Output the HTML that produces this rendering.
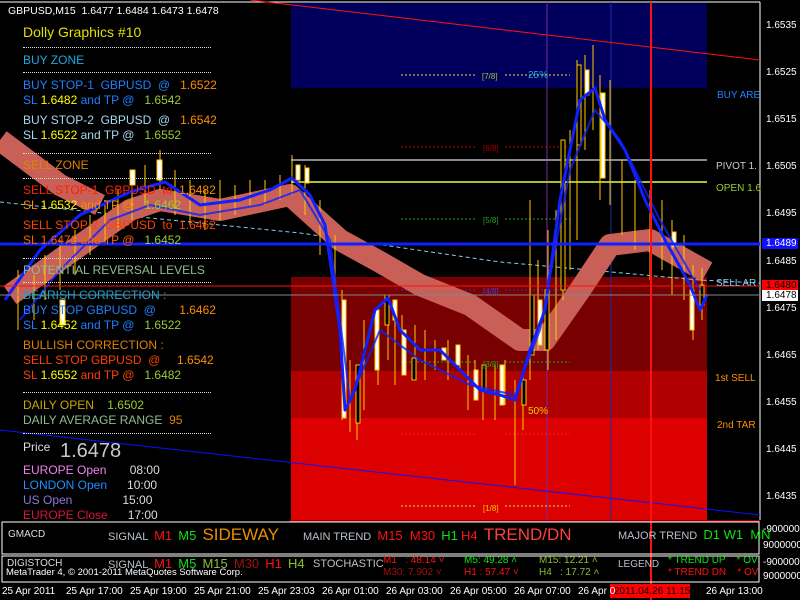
<!DOCTYPE html>
<html><head><meta charset="utf-8"><style>
body{margin:0;width:800px;height:600px;background:#000;overflow:hidden;font-family:"Liberation Sans",Arial,sans-serif;position:relative}
.t{position:absolute;font-size:12px;white-space:pre;line-height:14px}
.dot{position:absolute;left:23px;width:188px;border-top:1px dotted #ddd}
.ax{position:absolute;left:766px;font-size:10px;color:#fff}
.tm{position:absolute;top:586px;font-size:10px;color:#fff;white-space:pre}
.s{position:absolute;font-size:11px;white-space:pre;color:#b8c0c8;line-height:16px}
</style></head><body>
<svg width="800" height="600" style="position:absolute;left:0;top:0">
<rect x="0" y="2" width="760" height="518" fill="#000"/>
<line x1="0" y1="2" x2="760" y2="2" stroke="#fff"/>
<line x1="760" y1="2" x2="760" y2="520" stroke="#fff"/>
<rect x="291" y="3" width="416" height="85" fill="#00005c"/>
<rect x="291" y="277" width="416" height="94" fill="#780000"/>
<rect x="291" y="371" width="416" height="47" fill="#b00000"/>
<rect x="291" y="418" width="416" height="102" fill="#dc0000"/>
<line x1="547" y1="2" x2="547" y2="520" stroke="#7a2aa0"/>
<line x1="611" y1="2" x2="611" y2="520" stroke="#2030a0"/>
<line x1="291" y1="160" x2="707" y2="160" stroke="#888" stroke-width="2"/>
<line x1="291" y1="182" x2="707" y2="182" stroke="#a8c030" stroke-width="2"/>
<g stroke-dasharray="2,2" stroke-width="1">
<line x1="401" y1="75" x2="475" y2="75" stroke="#e0e040"/><line x1="505" y1="75" x2="570" y2="75" stroke="#e0e040"/>
<line x1="401" y1="147" x2="475" y2="147" stroke="#c00000"/><line x1="505" y1="147" x2="570" y2="147" stroke="#c00000"/>
<line x1="401" y1="219" x2="475" y2="219" stroke="#20a020"/><line x1="505" y1="219" x2="570" y2="219" stroke="#20a020"/>
<line x1="401" y1="290" x2="475" y2="290" stroke="#3030d0"/><line x1="505" y1="290" x2="570" y2="290" stroke="#3030d0"/>
<line x1="401" y1="362" x2="475" y2="362" stroke="#20a020"/><line x1="505" y1="362" x2="570" y2="362" stroke="#20a020"/>
<line x1="401" y1="434" x2="475" y2="434" stroke="#ff2020"/><line x1="505" y1="434" x2="570" y2="434" stroke="#ff2020"/>
<line x1="401" y1="506" x2="475" y2="506" stroke="#e0e040"/><line x1="505" y1="506" x2="570" y2="506" stroke="#e0e040"/>
</g>
<polyline points="0,202 120,215 300,233 500,262 700,280 760,283" fill="none" stroke="#8cc8e8" stroke-dasharray="4,3"/>
<line x1="250" y1="0" x2="760" y2="60" stroke="#ff1010"/>
<line x1="0" y1="430" x2="760" y2="515" stroke="#1010ff"/>
<path d="M10,295 L130,210 L160,200 L220,210 L290,195 L340,240 L380,262 L420,285 L470,305 L520,340 L545,340 L580,290 L610,245 L650,240 L707,272" fill="none" stroke="#c86058" stroke-width="22" stroke-linejoin="round"/>
<path d="M0,140 L60,185 L100,205" fill="none" stroke="#c86058" stroke-width="22"/>
<g stroke="#ffc800" fill="#fff">
<path d="M18,270V330 M34,275V320 M45,255V300 M60,240V290 M75,230V275 M90,215V255 M105,200V245 M118,190V230 M132,180V220 M145,165V205 M160,150V190 M175,170V215 M190,180V225 M205,190V230 M220,180V220 M235,185V215 M250,180V205 M265,180V205 M280,175V200 M292,155V195 M305,165V215 M320,200V255 M335,235V300 M342,290V420 M350,360V432 M357,380V440 M364,320V410 M378,320V385 M388,300V360 M395,320V385 M402,315V345 M415,325V380 M425,330V380 M435,340V370 M448,340V380 M460,345V370 M468,355V410 M475,360V400 M483,365V420 M495,365V420 M505,360V405 M515,380V485 M523,370V430 M530,200V380 M538,260V350 M548,230V370 M556,210V340 M563,150V300 M570,130V270 M577,60V240 M585,55V150 M593,45V130 M600,75V200 M610,80V205 M622,160V235 M635,180V250 M650,190V280 M662,200V270 M672,220V295 M684,235V300 M693,265V340 M702,268V320"/>
</g>
<g stroke="#ffc800" stroke-width="1">
<rect x="342" y="300" width="4" height="118" fill="#fff"/><rect x="356" y="365" width="4" height="58" fill="#000"/>
<rect x="375" y="310" width="4" height="60" fill="#fff"/><rect x="385" y="295" width="4" height="30" fill="#000"/>
<rect x="393" y="300" width="4" height="20" fill="#fff"/><rect x="402" y="330" width="4" height="45" fill="#fff"/>
<rect x="412" y="358" width="4" height="22" fill="#000"/><rect x="442" y="348" width="4" height="12" fill="#fff"/>
<rect x="456" y="345" width="4" height="20" fill="#fff"/><rect x="474" y="370" width="4" height="30" fill="#fff"/>
<rect x="482" y="365" width="4" height="25" fill="#000"/><rect x="500" y="365" width="4" height="40" fill="#fff"/>
<rect x="522" y="380" width="4" height="25" fill="#000"/><rect x="530" y="295" width="4" height="60" fill="#000"/>
<rect x="538" y="300" width="4" height="45" fill="#fff"/><rect x="545" y="290" width="4" height="60" fill="#000"/>
<rect x="561" y="140" width="4" height="150" fill="#000"/><rect x="577" y="65" width="4" height="80" fill="#000"/>
<rect x="585" y="70" width="4" height="25" fill="#fff"/><rect x="601" y="93" width="4" height="85" fill="#fff"/>
<rect x="296" y="165" width="4" height="15" fill="#fff"/><rect x="305" y="168" width="4" height="15" fill="#fff"/>
<rect x="157" y="160" width="5" height="20" fill="#fff"/><rect x="130" y="170" width="5" height="15" fill="#fff"/>
<rect x="672" y="232" width="4" height="15" fill="#fff"/><rect x="690" y="290" width="4" height="40" fill="#fff"/>
<rect x="700" y="285" width="4" height="20" fill="#000"/><rect x="60" y="300" width="5" height="25" fill="#fff"/>
</g>
<path d="M5,300 L40,250 L80,215 L130,192 L165,182 L200,205 L240,200 L270,190 L292,178 L310,195 L325,225 L340,330 L345,410 L355,390 L375,310 L388,298 L400,330 L420,350 L440,350 L460,370 L480,390 L500,395 L515,400 L530,350 L545,310 L560,200 L580,100 L595,88 L605,120 L625,150 L645,200 L665,240 L690,285 L700,310 L707,295" fill="none" stroke="#1020ff" stroke-width="3" stroke-linejoin="round"/>
<path d="M20,320 L60,270 L110,220 L150,205 L200,215 L260,205 L300,190 L330,240 L350,400 L380,330 L420,360 L470,385 L515,395 L540,330 L570,170 L595,110 L620,140 L660,220 L700,290" fill="none" stroke="#1020ff" stroke-width="2" opacity=".8"/>
<line x1="0" y1="244" x2="760" y2="244" stroke="#1020ff" stroke-width="3"/>
<line x1="0" y1="286" x2="760" y2="286" stroke="#ff1010"/>
<line x1="0" y1="295" x2="760" y2="295" stroke="#888"/>
<line x1="651" y1="2" x2="651" y2="600" stroke="#ff1010" stroke-width="2"/>
<rect x="762" y="238" width="36" height="11" fill="#1010ff"/>
<rect x="762" y="280" width="36" height="11" fill="#ff0000"/>
<rect x="762" y="290" width="36" height="11" fill="#fff"/>
<rect x="2" y="522" width="757" height="32" fill="none" stroke="#fff"/>
<rect x="2" y="556" width="757" height="26" fill="none" stroke="#fff"/>
<line x1="290" y1="521" x2="760" y2="521" stroke="#ff1010"/>
<rect x="610" y="584" width="80" height="14" fill="#ff0000"/>
</svg>
<div class="t" style="left:8px;top:4px;font-size:10.5px;color:#fff">GBPUSD,M15  1.6477 1.6484 1.6473 1.6478</div>
<div class="t" style="left:23px;top:25px;font-size:14px;color:#e0e000">Dolly Graphics #10</div>
<div class="dot" style="top:47px"></div><div class="dot" style="top:72px"></div><div class="dot" style="top:153px"></div><div class="dot" style="top:178px"></div><div class="dot" style="top:258px"></div><div class="dot" style="top:282px"></div><div class="dot" style="top:392px"></div><div class="dot" style="top:433px"></div>
<div class="t" style="left:23px;top:53px;color:#1ea8e0">BUY ZONE</div>
<div class="t" style="left:23px;top:78px;color:#1e80ff">BUY STOP-1  GBPUSD  @   <span style="color:#ff8c00">1.6522</span></div>
<div class="t" style="left:23px;top:93px;color:#1e80ff">SL <span style="color:#ffff00">1.6482</span> and TP @   <span style="color:#9acd32">1.6542</span></div>
<div class="t" style="left:23px;top:113px;color:#a8d8f0">BUY STOP-2  GBPUSD  @   <span style="color:#ff8c00">1.6542</span></div>
<div class="t" style="left:23px;top:128px;color:#a8d8f0">SL <span style="color:#ffff00">1.6522</span> and TP @   <span style="color:#9acd32">1.6552</span></div>
<div class="t" style="left:23px;top:158px;color:#e08000">SELL ZONE</div>
<div class="t" style="left:23px;top:183px;color:#ff2000">SELL STOP-1  GBPUSD  to  <span style="color:#ff8c00">1.6482</span></div>
<div class="t" style="left:23px;top:198px;color:#ff8c00">SL <span style="color:#ffff00">1.6532</span> and TP @   <span style="color:#9acd32">1.6462</span></div>
<div class="t" style="left:23px;top:218px;color:#ff4000">SELL STOP-2  GBPUSD  to  1.6462</div>
<div class="t" style="left:23px;top:233px;color:#ff6000">SL 1.6472 and TP @   <span style="color:#9acd32">1.6452</span></div>
<div class="t" style="left:23px;top:263px;color:#8fbc8f">POTENTIAL REVERSAL LEVELS</div>
<div class="t" style="left:23px;top:288px;color:#20a0d0">BEARISH CORRECTION :</div>
<div class="t" style="left:23px;top:303px;color:#1e80ff">BUY STOP GBPUSD  @       <span style="color:#ff8c00">1.6462</span></div>
<div class="t" style="left:23px;top:318px;color:#1e80ff">SL <span style="color:#ffff00">1.6452</span> and TP @   <span style="color:#9acd32">1.6522</span></div>
<div class="t" style="left:23px;top:338px;color:#e08000">BULLISH CORRECTION :</div>
<div class="t" style="left:23px;top:353px;color:#ff4000">SELL STOP GBPUSD  @     <span style="color:#ff8c00">1.6542</span></div>
<div class="t" style="left:23px;top:368px;color:#ff4000">SL <span style="color:#ffff00">1.6552</span> and TP @   <span style="color:#9acd32">1.6482</span></div>
<div class="t" style="left:23px;top:398px;color:#c8a800">DAILY OPEN    <span style="color:#9acd32">1.6502</span></div>
<div class="t" style="left:23px;top:413px;color:#8fbc8f">DAILY AVERAGE RANGE  <span style="color:#e08000">95</span></div>
<div class="t" style="left:23px;top:440px;color:#ddd">Price</div>
<div class="t" style="left:60px;top:440px;font-size:20px;line-height:22px;color:#c8c8c8">1.6478</div>
<div class="t" style="left:23px;top:463px;color:#ee82ee">EUROPE Open       <span style="color:#ddd">08:00</span></div>
<div class="t" style="left:23px;top:478px;color:#1e90ff">LONDON Open      <span style="color:#ddd">10:00</span></div>
<div class="t" style="left:23px;top:493px;color:#8a7ae0">US Open               <span style="color:#ddd">15:00</span></div>
<div class="t" style="left:23px;top:508px;color:#dc143c">EUROPE Close      <span style="color:#ddd">17:00</span></div>
<div class="t" style="left:482px;top:70px;font-size:8px;color:#9acd32">[7/8]</div>
<div class="t" style="left:528px;top:69px;font-size:10px;color:#1ea8e0">25%</div>
<div class="t" style="left:483px;top:142px;font-size:8px;color:#a00000">[6/8]</div>
<div class="t" style="left:483px;top:214px;font-size:8px;color:#20a020">[5/8]</div>
<div class="t" style="left:483px;top:285px;font-size:8px;color:#4040e0">[4/8]</div>
<div class="t" style="left:483px;top:358px;font-size:8px;color:#20a020">[3/8]</div>
<div class="t" style="left:528px;top:405px;font-size:10px;color:#ffc800">50%</div>
<div class="t" style="left:483px;top:502px;font-size:8px;color:#ffc800">[1/8]</div>
<div class="t" style="left:717px;top:89px;font-size:10px;color:#1e80ff">BUY ARE</div>
<div class="t" style="left:716px;top:160px;font-size:10px;color:#ccc">PIVOT 1.</div>
<div class="t" style="left:716px;top:182px;font-size:10px;color:#9acd32">OPEN 1.6</div>
<div class="t" style="left:716px;top:277px;font-size:10px;color:#8cc8e8">SELL AR</div>
<div class="t" style="left:715px;top:372px;font-size:10px;color:#ff9000">1st SELL</div>
<div class="t" style="left:717px;top:419px;font-size:10px;color:#ff9000">2nd TAR</div>
<div class="ax" style="top:20px">1.6535</div><div class="ax" style="top:67px">1.6525</div><div class="ax" style="top:114px">1.6515</div><div class="ax" style="top:161px">1.6505</div><div class="ax" style="top:208px">1.6495</div><div class="ax" style="top:256px">1.6485</div><div class="ax" style="top:303px">1.6475</div><div class="ax" style="top:350px">1.6465</div><div class="ax" style="top:397px">1.6455</div><div class="ax" style="top:444px">1.6445</div><div class="ax" style="top:491px">1.6435</div>
<div class="ax" style="top:238px;color:#fff">1.6489</div><div class="ax" style="top:280px;color:#000">1.6480</div><div class="ax" style="top:290px;color:#000">1.6478</div>
<div class="ax" style="top:524px;left:763px">-9000000</div><div class="ax" style="top:540px;left:763px">9000000</div><div class="ax" style="top:557px;left:763px">-9000000</div><div class="ax" style="top:571px;left:763px">9000000</div>
<div class="s" style="left:8px;top:527px;color:#ddd;font-size:10px">GMACD</div>
<div class="s" style="left:108px;top:527px">SIGNAL  <span style="color:#ff1010;font-size:13px">M1</span>  <span style="color:#10e010;font-size:13px">M5</span>  <span style="color:#e89000;font-size:17px">SIDEWAY</span></div>
<div class="s" style="left:303px;top:527px">MAIN TREND  <span style="color:#ff1010;font-size:13px">M15  M30</span>  <span style="color:#10e010;font-size:13px">H1</span> <span style="color:#ff1010;font-size:13px">H4</span>  <span style="color:#ff4040;font-size:17px">TREND/DN</span></div>
<div class="s" style="left:618px;top:527px">MAJOR TREND  <span style="color:#10e010;font-size:13px">D1 W1  MN</span></div>
<div class="s" style="left:7px;top:556px;color:#ddd;font-size:10px">DIGISTOCH</div>
<div class="s" style="left:6px;top:567px;color:#fff;font-size:9.5px;line-height:12px">MetaTrader 4, © 2001-2011 MetaQuotes Software Corp.</div>
<div class="s" style="left:108px;top:556px">SIGNAL  <span style="color:#ff1010;font-size:13px">M1</span>  <span style="color:#10e010;font-size:13px">M5</span>  <span style="color:#8ac030;font-size:13px">M15</span>  <span style="color:#a01010;font-size:13px">M30</span>  <span style="color:#ff1010;font-size:13px">H1</span>  <span style="color:#8ac030;font-size:13px">H4</span></div>
<div class="s" style="left:313px;top:556px">STOCHASTIC</div>
<div class="s" style="left:383px;top:555px;font-size:10px;line-height:11px;color:#ff1010">M1   : 48.14 ˅</div>
<div class="s" style="left:383px;top:567px;font-size:10px;line-height:11px;color:#a01010">M30: 7.902 ˅</div>
<div class="s" style="left:464px;top:555px;font-size:10px;line-height:11px;color:#10e010">M5: 49.28 ˄</div>
<div class="s" style="left:464px;top:567px;font-size:10px;line-height:11px;color:#ff1010">H1 : 57.47 ˅</div>
<div class="s" style="left:539px;top:555px;font-size:10px;line-height:11px;color:#8ac030">M15: 12.21 ˄</div>
<div class="s" style="left:539px;top:567px;font-size:10px;line-height:11px;color:#8ac030">H4   : 17.72 ˄</div>
<div class="s" style="left:618px;top:557px;font-size:10px">LEGEND</div>
<div class="s" style="left:668px;top:555px;font-size:10px;line-height:11px;color:#10e010">* TREND UP    * OV</div>
<div class="s" style="left:668px;top:567px;font-size:10px;line-height:11px;color:#ff1010">* TREND DN    * OV</div>
<div class="tm" style="left:2px">25 Apr 2011</div><div class="tm" style="left:66px">25 Apr 17:00</div><div class="tm" style="left:130px">25 Apr 19:00</div><div class="tm" style="left:194px">25 Apr 21:00</div><div class="tm" style="left:258px">25 Apr 23:03</div><div class="tm" style="left:322px">26 Apr 01:00</div><div class="tm" style="left:386px">26 Apr 03:00</div><div class="tm" style="left:450px">26 Apr 05:00</div><div class="tm" style="left:514px">26 Apr 07:00</div><div class="tm" style="left:578px">26 Apr 0</div><div class="tm" style="left:614px;color:#000">2011.04.26 11:15</div><div class="tm" style="left:706px">26 Apr 13:00</div>
</body></html>
